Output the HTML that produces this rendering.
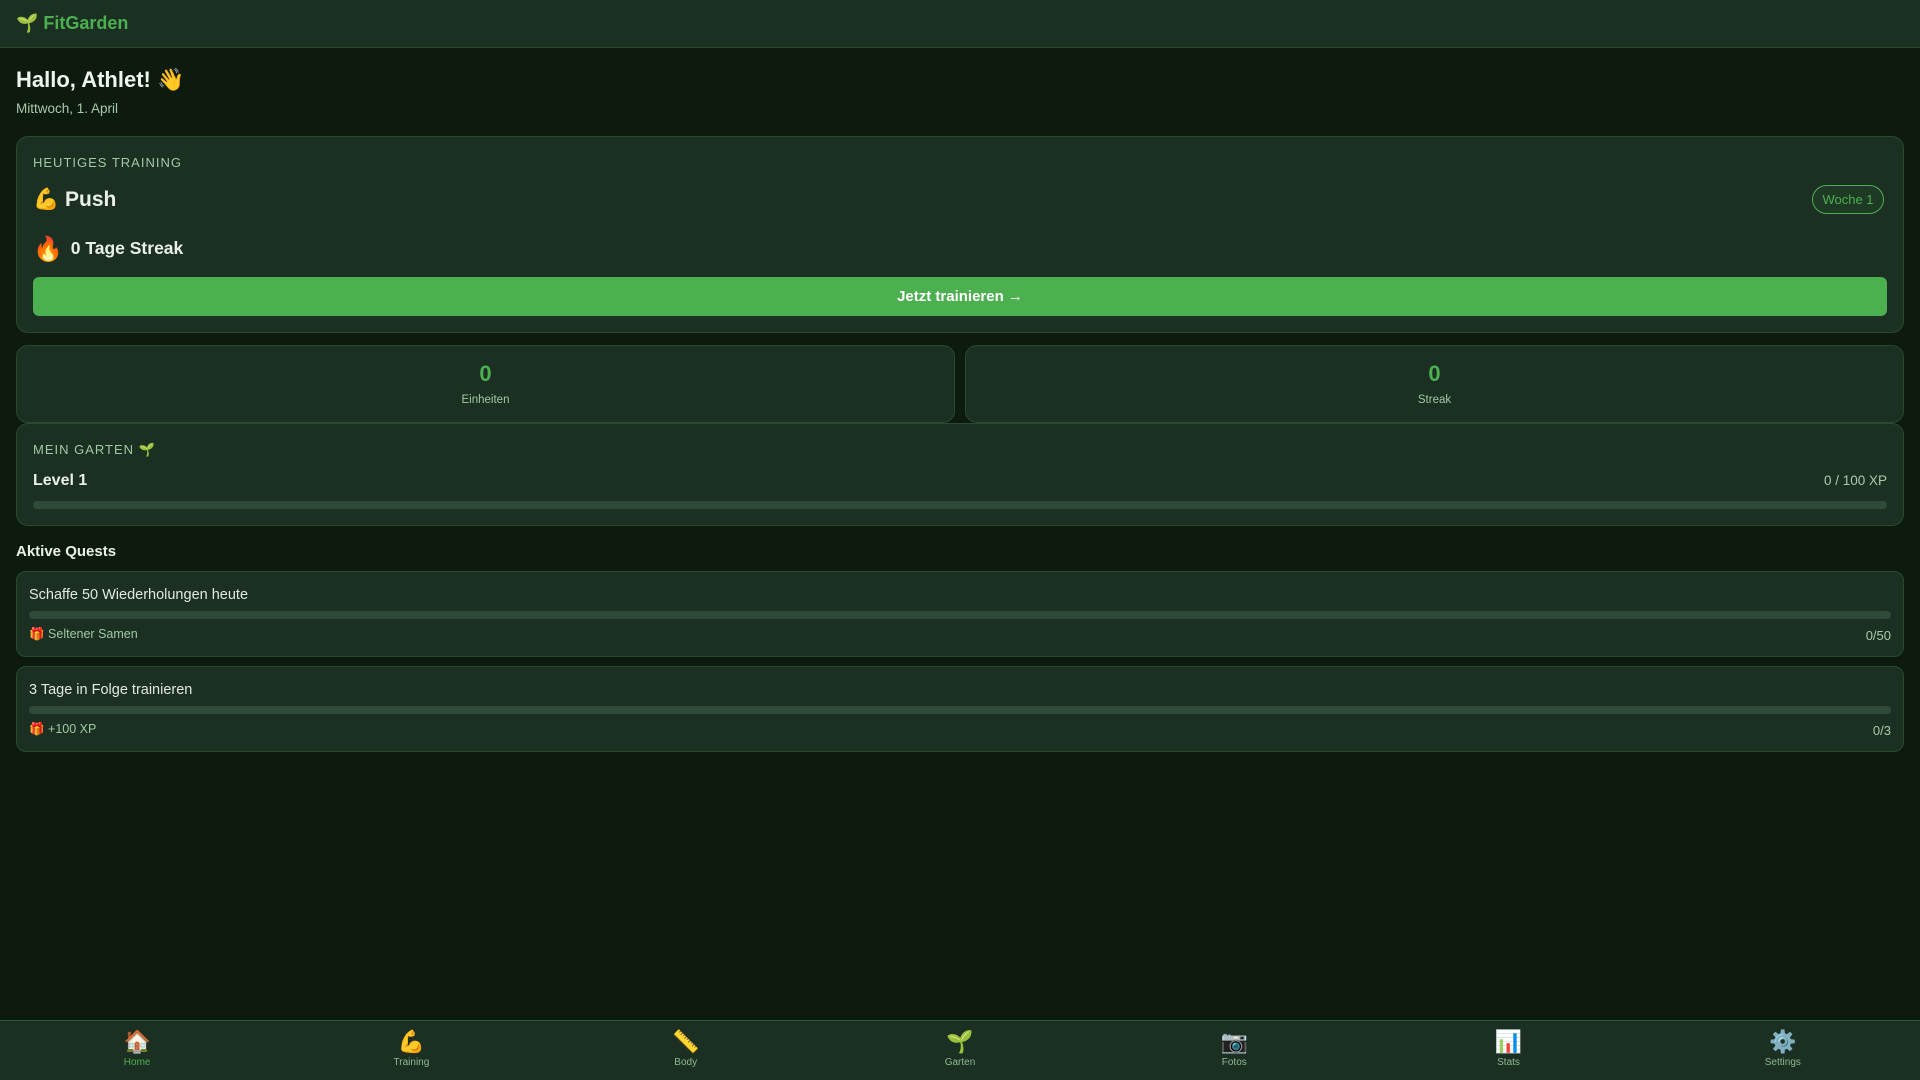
<!DOCTYPE html>
<html><head><meta charset="utf-8"><style>
*{margin:0;padding:0;box-sizing:border-box}
body{width:1920px;height:1080px;background:#0d1a0e;font-family:"Liberation Sans","DejaVu Sans",sans-serif;color:#e8f0e8;position:relative;overflow:hidden}
.a{position:absolute}
.card{position:absolute;background:#1b3022;border:1px solid #2a4a30;border-radius:12px}
.lbl{font-size:13px;letter-spacing:1px;color:#9fc9a2}
.bar{position:absolute;height:8px;background:#2f4a38;border-radius:4px}
.nav{position:absolute;top:1020px;left:0;width:1920px;height:60px;background:#1b3022;border-top:1px solid #2a5a30;display:flex}
.nav div{flex:1;text-align:center;padding-top:9px;font-size:10px;color:#8fb893}
.nav span{display:block;font-size:22px;line-height:24px;margin-bottom:3px}
</style></head><body>
<div class="a" style="left:0;top:0;width:1920px;height:48px;background:#1b3022;border-bottom:1px solid #2a4a30"></div>
<div class="a" style="left:16px;top:13px;font-size:18px;font-weight:bold;color:#4caf50">🌱 FitGarden</div>
<div class="a" style="left:16px;top:67px;font-size:22px;font-weight:bold;color:#eef4ee">Hallo, Athlet! 👋</div>
<div class="a" style="left:16px;top:101px;font-size:13.5px;color:#a9c9ab">Mittwoch, 1. April</div>

<div class="card" style="left:16px;top:136px;width:1888px;height:197px"></div>
<div class="a lbl" style="left:33px;top:155px">HEUTIGES TRAINING</div>
<div class="a" style="left:33px;top:188px;font-size:21px;font-weight:bold">💪 Push</div>
<div class="a" style="left:1812px;top:185px;width:72px;height:29px;border:1px solid #4caf50;border-radius:15px;background:#1e3a25;color:#4caf50;font-size:13px;text-align:center;line-height:27px">Woche 1</div>
<div class="a" style="left:33px;top:235px;font-size:17.5px;font-weight:bold"><span style="font-size:24px;vertical-align:-3px;margin-right:3px">🔥</span> 0 Tage Streak</div>
<div class="a" style="left:33px;top:277px;width:1854px;height:39px;background:#4caf50;border-radius:6px;color:#fff;font-weight:bold;font-size:15px;text-align:center;line-height:39px">Jetzt trainieren →</div>

<div class="card" style="left:16px;top:345px;width:939px;height:78px"></div>
<div class="a" style="left:16px;top:361px;width:939px;text-align:center;font-size:22px;font-weight:bold;color:#4caf50">0</div>
<div class="a" style="left:16px;top:394px;width:939px;text-align:center;font-size:11.5px;color:#9fc9a2">Einheiten</div>
<div class="card" style="left:965px;top:345px;width:939px;height:78px"></div>
<div class="a" style="left:965px;top:361px;width:939px;text-align:center;font-size:22px;font-weight:bold;color:#4caf50">0</div>
<div class="a" style="left:965px;top:394px;width:939px;text-align:center;font-size:11.5px;color:#9fc9a2">Streak</div>

<div class="card" style="left:16px;top:423px;width:1888px;height:103px"></div>
<div class="a lbl" style="left:33px;top:442px">MEIN GARTEN 🌱</div>
<div class="a" style="left:33px;top:472px;font-size:16px;font-weight:bold">Level 1</div>
<div class="a" style="top:473px;width:1187px;text-align:right;font-size:13.5px;color:#a9c9ab;left:700px">0 / 100 XP</div>
<div class="bar" style="left:33px;top:501px;width:1854px"></div>

<div class="a" style="left:16px;top:543px;font-size:15px;font-weight:bold">Aktive Quests</div>

<div class="card" style="left:16px;top:571px;width:1888px;height:86px;border-radius:10px"></div>
<div class="a" style="left:29px;top:587px;font-size:14.5px;color:#e0e8e0">Schaffe 50 Wiederholungen heute</div>
<div class="bar" style="left:29px;top:611px;width:1862px"></div>
<div class="a" style="left:29px;top:627px;font-size:12.5px;color:#9fc9a2">🎁 Seltener Samen</div>
<div class="a" style="top:628px;width:1191px;left:700px;text-align:right;font-size:13px;color:#a9c9ab">0/50</div>

<div class="card" style="left:16px;top:666px;width:1888px;height:86px;border-radius:10px"></div>
<div class="a" style="left:29px;top:682px;font-size:14.5px;color:#e0e8e0">3 Tage in Folge trainieren</div>
<div class="bar" style="left:29px;top:706px;width:1862px"></div>
<div class="a" style="left:29px;top:722px;font-size:12.5px;color:#9fc9a2">🎁 +100 XP</div>
<div class="a" style="left:700px;top:723px;width:1191px;text-align:right;font-size:13px;color:#a9c9ab">0/3</div>

<div class="nav">
<div style="color:#4caf50"><span>🏠</span>Home</div>
<div><span>💪</span>Training</div>
<div><span>📏</span>Body</div>
<div><span>🌱</span>Garten</div>
<div><span>📷</span>Fotos</div>
<div><span>📊</span>Stats</div>
<div><span>⚙️</span>Settings</div>
</div>
</body></html>
